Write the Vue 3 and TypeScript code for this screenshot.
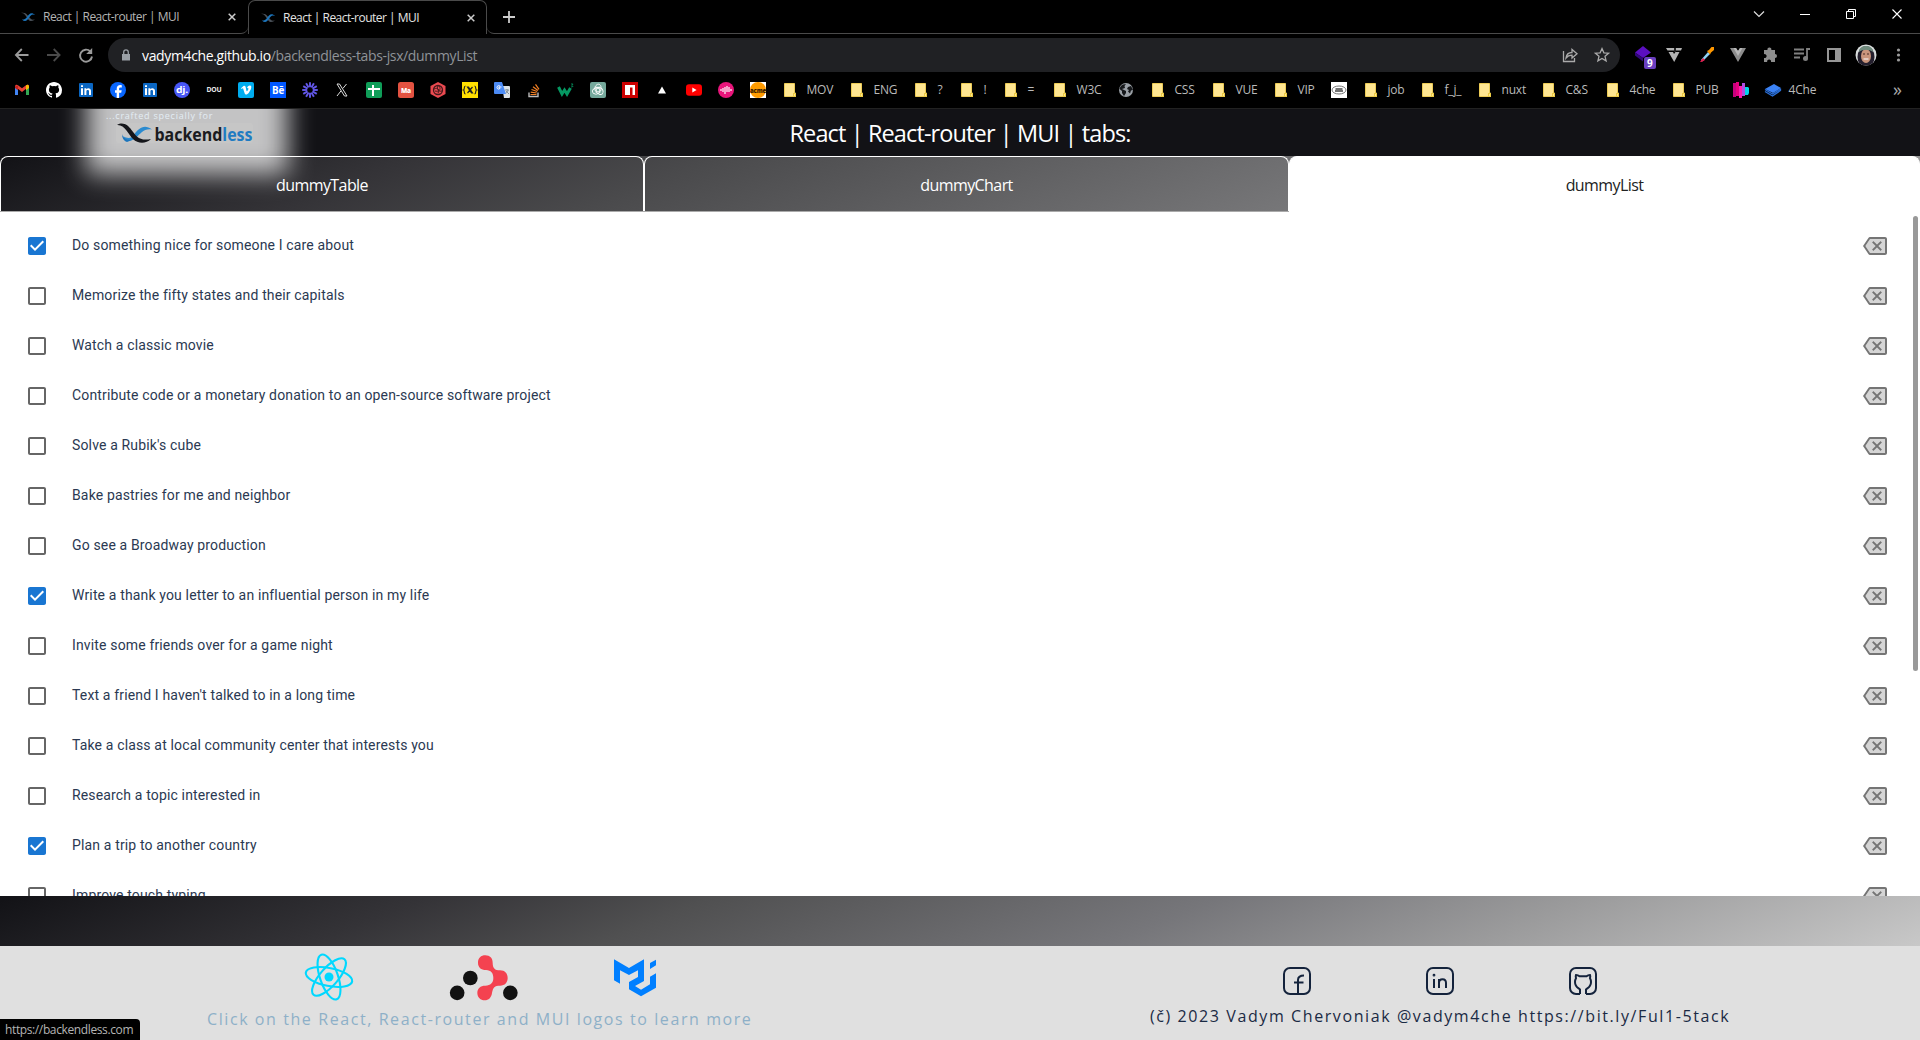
<script setup lang="ts">
interface Bookmark { icon: string; label?: string; width: number }
interface Task { text: string; done: boolean }

const folder = '<path d="M1.5 1.5h10v9h1v4h-11z" fill="#ffe692"/><path d="M1.5 1.5h10v9.5M1.5 1.5v13h9" stroke="#eccb55" fill="none"/><path d="M10 11h3v4h-3z" fill="#eccb45"/><path d="M11 12h1v2h-1z" fill="#ffe692"/>'
const linkedin = '<rect x="1" y="1" width="14" height="14" rx="1" fill="#0a66c2"/><path d="M3 6.3h2V13H3zM3 3.2h2V5H3zM6.400 6.300h1.900v.9c1.200-1.700 4.700-1.400 4.700 1.600V13h-2V9.300c0-1.900-2.600-1.800-2.600 0V13h-2z" fill="#fff"/>'
const tabIcon = '<path d="M1 4c5-1 6 8 10 8 2 0 3-1 4-2-1 1-3 1-4 0C8 7 6 2.500 1 4z" fill="#4b525a"/><path d="M15 6c-5-3-6 6-10 6-1 0-2-.5-3-1.500 4 .5 5-3 7-5s4-1.500 6 .5z" fill="#1c75bc"/>'
const githubPath = 'M8 0C3.580 0 0 3.580 0 8c0 3.540 2.290 6.530 5.470 7.590.4.070.55-.17.55-.38v-1.340c-2.230.48-2.700-1.070-2.700-1.070-.36-.92-.89-1.170-.89-1.170-.73-.5.050-.49.050-.49.81.060 1.230.83 1.230.83.72 1.230 1.870.87 2.330.67.070-.52.280-.87.510-1.070-1.780-.2-3.640-.89-3.640-3.950 0-.87.310-1.590.82-2.150-.08-.2-.36-1.020.08-2.120 0 0 .67-.21 2.200.82a7.600 7.600 0 0 1 4 0c1.530-1.030 2.200-.82 2.200-.82.44 1.100.16 1.920.08 2.120.51.56.82 1.280.82 2.150 0 3.070-1.870 3.750-3.650 3.950.29.25.54.73.54 1.480v2.200c0 .21.15.46.55.38A8 8 0 0 0 16 8c0-4.420-3.580-8-8-8z'
const rays = Array.from({ length: 12 }, (_, i) => `<path d="M8 .2v5" transform="rotate(${i * 30} 8 8)"/>`).join('')
const iconText = (t: string, size: number, y: number, fill = '#fff', len = 12, weight = 700) =>
  `<text x="8" y="${y}" text-anchor="middle" textLength="${len}" lengthAdjust="spacingAndGlyphs" font-family="Open Sans, sans-serif" font-weight="${weight}" font-size="${size}" fill="${fill}">${t}</text>`

const art: Record<string, string> = {
  folder, linkedin,
  gmail: '<path d="M1 4v9h3V6.500z" fill="#4285f4"/><path d="M12 6.500V13h3V4z" fill="#34a853"/><path d="M1 4.500C1 2.500 3 2.500 4 3.300l4 3 4-3c1-.8 3-.8 3 1.200L8 10z" fill="#ea4335"/><path d="M1 4.500V6l3 2.300V3.500z" fill="#c5221f"/><path d="M12 3.400v4.900L15 6V4.500c0-2-2-2-3-1.100z" fill="#fbbc04"/>',
  github: `<path d="${githubPath}" fill="#fff"/>`,
  facebook: '<circle cx="8" cy="8" r="8" fill="#0866ff"/><path d="M6.700 16v-5.300H5V8.300h1.700V7c0-2.800 1.300-4 3.800-4l1.300.2v2.200h-1.200c-1.200 0-1.500.5-1.500 1.500v1.400h2.600l-.5 2.400H9.100V16z" fill="#fff"/>',
  dj: '<circle cx="8" cy="8" r="8" fill="#4756f5"/>' + iconText('dj.', 9.500, 10.500, '#fff', 12),
  dou: iconText('DOU', 7, 10.400, '#e8e8e8', 15),
  vimeo: '<rect width="16" height="16" rx="2" fill="#00adef"/><path d="M3 6.200 5.500 4c1.300-.9 2 .1 2.300 1.700.3 1.800.7 3.500 1.100 3.500S11 6.700 10.200 6.200c-.3-.3-.8 0-1.200.2.400-2 1.600-2.900 3-2.800 2.500.3 1 4.300-1 6.800-2.200 2.700-3.900 2.700-4.600 0L5.200 6.700c-.3-.8-.8-.3-1.500.3z" fill="#fff"/>',
  behance: '<rect width="16" height="16" fill="#0057ff"/>' + iconText('Bē', 10, 11.500),
  rays: `<g stroke="#6257e8" stroke-width="1.900">${rays}</g>`,
  x: '<path d="M3 2h2.500L13 14h-2.500z" fill="none" stroke="#ddd"/><path d="M12.500 2 9 6.300M6.900 9 3 14" stroke="#ddd"/>',
  sheets: '<rect width="16" height="16" rx="2" fill="#0f9d58"/><path d="M6 3h2v3h6v2H8v6H6V8H2V6h4z" fill="#fff"/>',
  ma: '<rect width="16" height="16" rx="2.500" fill="#e25241"/>' + iconText('Ma', 7.500, 10.700, '#fff', 10, 800),
  hex: '<path d="m8 0 7.500 4v8L8 16 .5 12V4z" fill="#ea4a50"/><circle cx="8" cy="8" r="4.500" fill="none" stroke="#43191c" stroke-width="1.300"/><path d="M4 7c4-2 6 1 4 4m1-7c3 4-1 6-4 5m7 0C9 10 6 7 8 4" fill="none" stroke="#43191c"/>',
  code: '<rect width="16" height="16" fill="#ffdf00"/><path d="M5.500 5h1l4 6h-1zM10.500 5l-5 6M3.500 4C1.500 4 3 7.500 1.500 8 3 8.500 1.500 12 3.500 12M12.500 4c2 0 .5 3.500 2 4-1.500.5 0 4-2 4" fill="none" stroke="#222" stroke-width="1.200"/>',
  translate: '<path d="M8 4h7a1 1 0 0 1 1 1v10a1 1 0 0 1-1 1H10z" fill="#dce1e5"/><path d="M1 0h7l4 12H1a1 1 0 0 1-1-1V1a1 1 0 0 1 1-1z" fill="#4c8bf5"/><path d="M7.500 5H5v1.300h1C5.600 7.700 3 7.400 3 5.500S5.200 3.200 6 4.300" fill="none" stroke="#fff"/><path d="M11 8h4m-2-1v1m1 0c0 2-2 3-2 3m0-2 3 3" fill="none" stroke="#6b7c88" stroke-width=".8"/>',
  stack: '<path d="M3 10.500v4h9v-4" fill="none" stroke="#bcbbbb" stroke-width="1.400"/><path d="M4.500 12.500h6M4.700 10.200l6 .8M5.500 7.500l5.700 2M7 4.700l5 3.700M9.500 2.300l3.500 5" fill="none" stroke="#f48024" stroke-width="1.200"/>',
  w3: '<path d="M.5 5 4 12l2.500-4L9 12l3.500-6" fill="none" stroke="#059862" stroke-width="3"/><path d="M13 2h2l-1 1.500 1 1-2 .5" fill="none" stroke="#059862" stroke-width=".8"/>',
  gpt: '<rect width="16" height="16" rx="2" fill="#75a99c"/><g fill="none" stroke="#fff" stroke-width=".9"><path d="M6 3.500c2-2.500 5-1 5 1.500v3.500L8 10 5 8.500V5z"/><path d="M6 3.500c2-2.500 5-1 5 1.500v3.500L8 10 5 8.500V5z" transform="rotate(120 8 8)"/><path d="M6 3.500c2-2.500 5-1 5 1.500v3.500L8 10 5 8.500V5z" transform="rotate(240 8 8)"/></g>',
  npm: '<rect width="16" height="16" fill="#cb0000"/><path d="M3 3h10v10h-2.500V5.500H8V13H3z" fill="#fff"/>',
  vercel: '<path d="m8 4.500 4 7H4z" fill="#fff"/>',
  youtube: '<rect y="2.300" width="16" height="11.500" rx="3" fill="#f00"/><path d="m6.300 5.600 4.300 2.400-4.300 2.400z" fill="#fff"/>',
  wave: '<circle cx="8" cy="8" r="8" fill="#e9157b"/><path d="M3 7v2M5 6v4M7 5v7M9 4v6M11 5v5M13 7v2" stroke="#fff" stroke-width="1.200"/>',
  acme: '<rect width="16" height="16" fill="#fff"/><circle cx="8" cy="8" r="8" fill="#ff9b00"/>' + iconText('acme', 7, 10.500, '#3a1a00', 16, 800),
  globe: '<circle cx="8" cy="8" r="7" fill="#9aa0a6"/><path d="M5 2.500 8 2 6.500 4 7 6 4 7l4 2v2l-2 3-2-3V9L1.500 7C2 5 3 3.500 5 2.500zM10 5l3-1 2 4-2 .5-1 3-2-2 1-1.500-2-1z" fill="#15171a"/>',
  stamp: '<rect width="16" height="16" fill="#fff"/><ellipse cx="8" cy="8" rx="7" ry="4" fill="none" stroke="#777"/><path d="M4.500 7h7M4 9h8" stroke="#444" stroke-width="1.400"/>',
  pink: '<path d="M0 1h3v14H0z" fill="#c6007e"/><path d="M3 0h3v14H3z" fill="#e6007e"/><path d="M6 4h3v12H6z" fill="#ff1cb0"/><path d="M9 1h3v13H9z" fill="#b04ce0"/><path d="M12 5h3l1 1v5l-1 2h-3z" fill="#00d4e8"/>',
  layers: '<path d="m0 7 9-5 7 4-8 5z" fill="#3b82f6"/><path d="m0 7.500 7.500 4.500L15.500 7M0 9.500l7.500 4.500 8-5.500V6.500" fill="none" stroke="#2a6fd8" stroke-width="1.300"/>',
}

const bookmarks: Bookmark[] = [
  ...['gmail', 'github', 'linkedin', 'facebook', 'linkedin', 'dj', 'dou', 'vimeo', 'behance', 'rays', 'x', 'sheets', 'ma', 'hex', 'code', 'translate', 'stack', 'w3', 'gpt', 'npm', 'vercel', 'youtube', 'wave'].map(icon => ({ icon, width: 32 })),
  { icon: 'acme', width: 33 },
  { icon: 'folder', label: 'MOV', width: 67 },
  { icon: 'folder', label: 'ENG', width: 64 },
  { icon: 'folder', label: '?', width: 46 },
  { icon: 'folder', label: '!', width: 44 },
  { icon: 'folder', label: '=', width: 49 },
  { icon: 'folder', label: 'W3C', width: 65 },
  { icon: 'globe', width: 33 },
  { icon: 'folder', label: 'CSS', width: 61 },
  { icon: 'folder', label: 'VUE', width: 62 },
  { icon: 'folder', label: 'VIP', width: 57 },
  { icon: 'stamp', width: 33 },
  { icon: 'folder', label: 'job', width: 57 },
  { icon: 'folder', label: 'f_j_', width: 57 },
  { icon: 'folder', label: 'nuxt', width: 64 },
  { icon: 'folder', label: 'C&S', width: 64 },
  { icon: 'folder', label: '4che', width: 66 },
  { icon: 'folder', label: 'PUB', width: 61 },
  { icon: 'pink', width: 32 },
  { icon: 'layers', label: '4Che', width: 70 },
]

const tasks: Task[] = [
  { text: 'Do something nice for someone I care about', done: true },
  { text: 'Memorize the fifty states and their capitals', done: false },
  { text: 'Watch a classic movie', done: false },
  { text: 'Contribute code or a monetary donation to an open-source software project', done: false },
  { text: "Solve a Rubik's cube", done: false },
  { text: 'Bake pastries for me and neighbor', done: false },
  { text: 'Go see a Broadway production', done: false },
  { text: 'Write a thank you letter to an influential person in my life', done: true },
  { text: 'Invite some friends over for a game night', done: false },
  { text: "Text a friend I haven't talked to in a long time", done: false },
  { text: 'Take a class at local community center that interests you', done: false },
  { text: 'Research a topic interested in', done: false },
  { text: 'Plan a trip to another country', done: true },
  { text: 'Improve touch typing', done: false },
]
</script>

<template>
  <div class="screen">
    <div class="tabstrip">
      <div class="btab first">
        <svg class="fav" viewBox="0 0 16 16" v-html="tabIcon" />
        <span class="btitle">React | React-router | MUI</span>
        <svg class="bclose" viewBox="0 0 8 8"><path d="m.7.7 6.600 6.600m0-6.600L.7 7.300" /></svg>
      </div>
      <div class="btab active">
        <svg class="fav" viewBox="0 0 16 16" v-html="tabIcon" />
        <span class="btitle">React | React-router | MUI</span>
        <svg class="bclose" viewBox="0 0 8 8"><path d="m.7.7 6.600 6.600m0-6.600L.7 7.300" /></svg>
      </div>
      <div class="rest">
        <svg class="plus" viewBox="0 0 12 12"><path d="M6 0v12M0 6h12" stroke="#ccc" stroke-width="1.800" /></svg>
        <svg class="win" viewBox="0 0 150 16" fill="none" stroke="#fff">
          <path d="m4 5.500 5 5 5-5" stroke="#ddd" stroke-width="1.200" />
          <path d="M50 8.500h10" />
          <path d="M96.500 5.500h7v7h-7zM98.500 5V3.500h7v7H104" />
          <path d="m142.500 3.500 9 9m0-9-9 9" stroke-width="1.100" />
        </svg>
      </div>
    </div>

    <div class="toolbar">
      <svg class="nav" viewBox="0 0 90 16" fill="none">
        <path d="M14.500 8H2m5.800-6L1.900 8l5.900 6" stroke="#9b9b9b" stroke-width="1.800" />
        <path d="M33 8h12.500m-5.800-6 5.900 6-5.900 6" stroke="#4b4b4b" stroke-width="1.800" />
        <path d="M76.300 4.400A6 6 0 1 0 78 9.500" stroke="#9b9b9b" stroke-width="1.900" />
        <path d="M78.200 1v6h-6z" fill="#9b9b9b" />
      </svg>
      <div class="url">
        <svg class="lock" viewBox="0 0 10 12"><path d="M1 5h8v6.500H1z" fill="#9aa0a6" /><path d="M2.700 5V3.200a2.300 2.300 0 0 1 4.600 0V5" fill="none" stroke="#9aa0a6" stroke-width="1.300" /></svg>
        <span class="addr"><b>vadym4che.github.io</b>/backendless-tabs-jsx/dummyList</span>
        <svg class="urlicons" viewBox="0 0 48 16" fill="none" stroke="#aaa" stroke-width="1.300">
          <path d="M1.500 4v10.500h11V11" /><path d="M4 11c.5-4 3-5.500 6-5.500V2.500l5 4.300-5 4.200V8.200C7 8.200 5.500 9 4 11z" />
          <path d="m40 1.500 1.900 4.300 4.700.4-3.600 3.100 1.100 4.600-4.100-2.500-4.100 2.500L37 9.300l-3.600-3.100 4.700-.4z" />
        </svg>
      </div>
      <svg class="ext" viewBox="0 0 280 34">
        <path d="m11 8 8 6.500-8 5.500-8-5.500z" fill="#5b0fc0" /><path d="m3 14.500 8 5.500v3.500l-8-6z" fill="#32087a" />
        <rect x="12" y="19" width="12" height="12" rx="2" fill="#6a3fc0" /><text x="15" y="28.700" class="badge">9</text>
        <path d="M34 10h16l-1 2.500H35.500zM36.500 14H41l1 2 1.500-2h4l-5.300 10z" fill="#b3b3b3" /><path d="M42 10h2v4h-2z" fill="#222" />
        <path d="m69 22 7-8 2 2-7.500 7.500z" fill="#8fd3f5" /><path d="m68 24 3-4 2 2-3.500 2z" fill="#e6194b" /><path d="m75 13 2-1 2.500-3 2.500 0v3l-3 2.500-1 2z" fill="#ff9800" />
        <path d="M98 10h6l2 3 2-3h6l-8 14z" fill="#8d8d8d" /><path d="m101.500 10 4.500 8 4.500-8H108l-2 3-2-3z" fill="#b8b8b8" />
        <path d="M132 12h3.500a2 2 0 1 1 3.800 0H143v4a2 2 0 1 1 0 4v4h-4a2 2 0 1 0-3.800 0H132v-4a2 2 0 1 0 0-3.800z" fill="#8e8e8e" />
        <path d="M162 11.500h10M162 15.500h10M162 19.500h6M178 11h-3v9" fill="none" stroke="#808080" stroke-width="1.800" /><circle cx="173.500" cy="20.500" r="2.500" fill="#808080" />
        <rect x="196" y="11" width="12" height="12" fill="none" stroke="#969696" stroke-width="2" /><rect x="203" y="11" width="5" height="12" fill="#969696" />
        <clipPath id="face"><circle cx="234" cy="17" r="10.500" /></clipPath>
        <g clip-path="url(#face)"><path d="M223 6h22v22h-22z" fill="#d8dcdc" /><ellipse cx="234" cy="19" rx="8.500" ry="11" fill="#241f2d" /><ellipse cx="234" cy="18" rx="5" ry="7" fill="#c9957c" /><path d="M227 14c0-8 14-8 14 0-4-3-10-3-14 0z" fill="#6f8b7d" /><path d="M231 16h2m2 0h2" stroke="#4a2a24" /><path d="M231.500 21h5" stroke="#fff" stroke-width="1.200" /></g>
        <circle cx="266.500" cy="12" r="1.600" fill="#9b9b9b" /><circle cx="266.500" cy="17" r="1.600" fill="#9b9b9b" /><circle cx="266.500" cy="22" r="1.600" fill="#9b9b9b" />
      </svg>
    </div>

    <div class="bookmarks">
      <div v-for="(b, i) in bookmarks" :key="i" class="bm" :style="{ width: b.width + 'px' }">
        <svg viewBox="0 0 16 16" v-html="art[b.icon]" /><span v-if="b.label">{{ b.label }}</span>
      </div>
      <span class="more">»</span>
    </div>

    <div class="page">
      <header class="head">
        <h1>React | React-router | MUI | tabs:</h1>
      </header>
      <nav class="tabs">
        <a class="tab">dummyTable</a>
        <a class="tab second">dummyChart</a>
        <a class="tab current">dummyList</a>
      </nav>
      <div class="glow">
        <span class="crafted">...crafted specially for</span>
        <svg class="brand" viewBox="0 0 137 20">
          <path d="M3 0h131a3 3 0 0 1 3 3v14a3 3 0 0 1-3 3H3a3 3 0 0 1-3-3V3a3 3 0 0 1 3-3z" fill="#c6c6c6" />
          <path d="M36 6.500C28 0 22 6 18.500 11c-2.500 4-6 5.500-11.500 2 2 4 8 6.500 13 2 4-4 8-10 16-8.500z" fill="#2b8bd0" />
          <path d="M6 11c1 5 7 6 10 6l-5 2c-3-1-5-4-5-8z" fill="#1c75bc" />
          <path d="M1 2c6-3.500 11 0 14.500 5 4.500 6 8 11.500 19.500 9-5 5-13 5-18 0C12 11 9 1.500 1 2z" fill="#15161b" />
          <text x="38.500" y="17.500" textLength="98" lengthAdjust="spacingAndGlyphs" fill="#1a1b20">backend<tspan fill="#1f7cc2">less</tspan></text>
        </svg>
      </div>

      <main class="list">
        <div v-for="t in tasks" :key="t.text" class="row">
          <svg class="check" viewBox="0 0 24 24">
            <path v-if="t.done" fill="#1976d2" d="M19 3H5c-1.110 0-2 .9-2 2v14c0 1.100.89 2 2 2h14c1.110 0 2-.9 2-2V5c0-1.100-.89-2-2-2zm-9 14l-5-5 1.410-1.410L10 14.170l7.590-7.590L19 8l-9 9z" />
            <path v-else fill="#666" d="M19 5v14H5V5h14m0-2H5c-1.100 0-2 .9-2 2v14c0 1.100.9 2 2 2h14c1.100 0 2-.9 2-2V5c0-1.100-.9-2-2-2z" />
          </svg>
          <span class="task">{{ t.text }}</span>
          <svg class="del" viewBox="0 0 24 24" fill="#757575">
            <path opacity=".3" d="M7.060 5L2.400 12l4.670 7H22V5H7.060zM9 8.410L10.410 7 14 10.590 17.590 7 19 8.410 15.410 12 19 15.590 17.590 17 14 13.410 10.410 17 9 15.590 12.590 12 9 8.410z" />
            <path d="M22 3H7c-.69 0-1.230.35-1.590.88L0 12l5.410 8.110c.36.53.9.89 1.590.89h15c1.100 0 2-.9 2-2V5c0-1.100-.9-2-2-2zm0 16H7.070L2.400 12l4.660-7H22v14zm-11.590-2L14 13.410 17.590 17 19 15.590 15.410 12 19 8.410 17.590 7 14 10.590 10.410 7 9 8.410 12.590 12 9 15.590z" />
          </svg>
        </div>
        <div class="thumb" />
      </main>
      <div class="strip" />

      <footer class="foot">
        <div class="left">
          <div class="logos">
            <svg width="50" height="50" viewBox="-25 -25 50 50" fill="none" stroke="#00d8ff" stroke-width="2.100">
              <circle r="4.500" fill="#00d8ff" stroke="none" />
              <ellipse rx="23.600" ry="9" transform="rotate(11)" /><ellipse rx="23.600" ry="9" transform="rotate(71)" /><ellipse rx="23.600" ry="9" transform="rotate(131)" />
            </svg>
            <svg width="68" height="46" viewBox="150 287 204 138">
              <g fill="#121212"><circle cx="171.500" cy="400.500" r="22" /><circle cx="211" cy="356" r="22" /><circle cx="331" cy="400.500" r="22" /></g>
              <path fill="#f44250" d="M256 288c14 0 22 9 22 22 0 16 6 23 22 23 15 0 23 10 23 23s-8 23-23 23c-16 0-21 5-24 22-2 14-10 22-22 22s-22-9-22-22c0-14 9-22 24-22 16-1 24-8 24-23s-7-23-22-24c-15 0-24-8-24-22s9-22 22-22z" />
            </svg>
            <svg width="42" height="38" viewBox="642 299 126 114" fill="#007fff">
              <path d="m642 300 45 26 45-26v65l-27 15 18 11 27-16v-23l18-10v43l-45 26-36-21v-22l27-15v-20l-27 14-27-14v40l-18-10zM750 311l18-10v17l-18 11z" />
            </svg>
          </div>
          <p class="hint">Click on the React, React-router and MUI logos to learn more</p>
        </div>
        <div class="right">
          <div class="social">
            <svg viewBox="0 0 28 28"><rect x="1" y="1" width="26" height="26" rx="6" /><path d="M15 27V13q0-4.500 6-4.500M11 15.500h9.500" /></svg>
            <svg viewBox="0 0 28 28"><rect x="1" y="1" width="26" height="26" rx="6" /><path d="M8 12v9M13 21v-9m0 4c0-5 7-5 7 0v5" /><circle cx="8" cy="8.200" r=".8" stroke-width="1.200" /></svg>
            <svg viewBox="0 0 28 28"><path d="M11 27H7a6 6 0 0 1-6-6V7a6 6 0 0 1 6-6h14a6 6 0 0 1 6 6v14a6 6 0 0 1-6 6h-4" /><path d="M11 27v-4.500c-1-1.500-5-2-5-7.500 0-2 .5-3 1-3.800-.4-1.500-.3-2.600 0-3.200 1.500 0 2.700.6 3.500 1.300h7c.8-.7 2-1.300 3.500-1.300.3.600.4 1.700 0 3.200.5.800 1 1.800 1 3.800 0 5.500-4 6-5 7.500V27" /></svg>
          </div>
          <p class="copy">(č) 2023 Vadym Chervoniak @vadym4che https://bit.ly/Ful1-5tack</p>
        </div>
      </footer>
      <div class="status"><span>https://backendless.com</span></div>
    </div>
  </div>
</template>

<style>
body { margin: 0; background: #000; overflow: hidden; }
</style>

<style scoped>
* { box-sizing: border-box; }
svg { display: block; flex: none; overflow: visible; }
.screen { width: 1920px; height: 1040px; display: flex; flex-direction: column; overflow: hidden; background: #000; font-family: "Open Sans", "Noto Sans", sans-serif; }
.tabstrip { height: 34px; flex: none; display: flex; }
.btab { height: 34px; display: flex; align-items: center; border-bottom: 1px solid #4a4a4a; color: #b4b4b4; font-size: 12px; }
.btab.first { width: 248px; padding-left: 20px; border-bottom-right-radius: 7px; }
.btab.active { width: 239px; padding-left: 11px; border: 1px solid #4a4a4a; border-bottom: 0; border-radius: 7px 7px 0 0; color: #e4e4e4; }
.fav { width: 16px; height: 16px; }
.btitle { width: 185px; margin-left: 7px; letter-spacing: -0.52px; white-space: nowrap; }
.active .btitle { width: 184px; }
.bclose { width: 8px; height: 8px; stroke: #ccc; stroke-width: 1.5; }
.rest { flex: 1; display: flex; justify-content: space-between; border-bottom: 1px solid #4a4a4a; border-bottom-left-radius: 7px; }
.plus { width: 12px; height: 12px; margin: 11px 0 0 16px; }
.win { width: 150px; height: 16px; margin: 6px 20px 0 0; }
.toolbar { height: 42px; flex: none; display: flex; align-items: center; }
.nav { width: 90px; height: 16px; margin-left: 14px; }
.url { width: 1512px; height: 34px; flex: none; margin-left: 4px; border-radius: 17px; background: #202124; display: flex; align-items: center; }
.lock { width: 10px; height: 12px; margin: 0 11px 0 13px; }
.addr { flex: 1; font-size: 14px; letter-spacing: -0.36px; color: #8f9398; }
.addr b { font-weight: 400; color: #fff; }
.urlicons { width: 48px; height: 16px; margin-right: 10px; }
.ext { width: 280px; height: 34px; margin-left: 12px; }
.badge { font: 700 10px "Open Sans", sans-serif; fill: #fff; }
.bookmarks { height: 33px; flex: none; display: flex; align-items: center; padding-left: 14px; padding-bottom: 5px; border-bottom: 1px solid #222; color: #bababa; font-size: 12px; }
.bm { display: flex; align-items: center; flex: none; white-space: nowrap; letter-spacing: -0.2px; }
.bm svg { width: 16px; height: 16px; }
.bm span { margin-left: 7.5px; line-height: 20px; }
.more { margin-left: 58px; font-size: 18px; color: #aaa; line-height: 22px; margin-top: -2px; }

.page { height: 931px; display: flex; flex-direction: column; position: relative; overflow: hidden; }
.head { height: 47px; flex: none; background: #121216; display: flex; align-items: center; justify-content: center; }
h1 { margin: 2px 0 0; font-size: 23.5px; font-weight: 400; letter-spacing: -0.88px; line-height: 45px; color: #fff; white-space: nowrap; }
.tabs { height: 56px; flex: none; display: flex; background: linear-gradient(158deg, #121216 0%, #343337 20%, #4a4a4c 35%, #78787a 70%, #9f9f9f 100%); border-bottom: 1px solid #aaa; }
.tab { width: 644px; height: 55px; flex: none; border: 1px solid #fff; border-bottom: 0; border-radius: 8px 8px 0 0; display: flex; align-items: center; justify-content: center; padding-top: 2px; color: #fff; font-size: 16px; letter-spacing: -0.58px; }
.tab.second { width: 645px; }
.tab.current { width: 631px; height: 56px; padding-top: 1px; background: #fff; color: #222; }
.glow { position: absolute; z-index: 1; left: 106px; top: 0; width: 165px; height: 45px; }
.glow::before { content: ""; position: absolute; z-index: -1; left: -20px; right: -17px; top: -50px; bottom: -20px; background: rgba(255, 255, 255, .75); filter: blur(13px); }
.crafted { display: block; padding-top: 1px; font-size: 9px; line-height: 12px; letter-spacing: .75px; color: #e4edf4; white-space: nowrap; }
.brand { width: 137px; height: 20px; margin: 1px 0 0 10px; }
.brand text { font: 700 18px "Open Sans", sans-serif; }
.list { height: 684px; flex: none; background: #fff; position: relative; overflow: hidden; padding: 9px 29px 0 25px; }
.row { height: 50px; display: flex; align-items: center; }
.check { width: 24px; height: 24px; }
.task { flex: 1; margin-left: 23px; font: 400 14px/20px Roboto, sans-serif; letter-spacing: .15px; color: #2b3952; margin-top: -2px; }
.del { width: 24px; height: 24px; margin-right: 4px; }
.thumb { position: absolute; right: 2px; top: 4px; width: 5px; height: 455px; border-radius: 3px; background: #999; }
.strip { height: 50px; flex: none; background: linear-gradient(158deg, #121216 0%, #343337 21%, #505051 35%, #76767a 60%, #9b9b9c 78%, #c8c8c8 100%); }
.foot { flex: 1; background: #e0e0e0; display: flex; }
.left { width: 960px; }
.logos { height: 62px; padding: 0 0 0 304px; display: flex; align-items: center; }
.logos svg:nth-child(2) { margin-left: 96px; margin-top: 2px; }
.logos svg:nth-child(3) { margin-left: 96px; margin-top: 2px; }
.hint { margin: 0 0 0 207px; font-size: 16px; line-height: 22px; letter-spacing: 1.58px; color: #8eb0c8; white-space: nowrap; }
.social { display: flex; gap: 115px; padding: 21px 0 0 323px; }
.social svg { width: 28px; height: 28px; fill: none; stroke: #14233c; stroke-width: 2; }
.copy { margin: 10px 0 0 190px; font-size: 16px; line-height: 22px; letter-spacing: 1.59px; color: #1a2a44; white-space: nowrap; }
.status { position: absolute; left: 0; bottom: 0; width: 140px; height: 21px; background: #000; border-radius: 0 4px 0 0; padding-left: 5px; font-size: 12px; line-height: 21px; letter-spacing: -0.38px; color: #b4b4b4; white-space: nowrap; }
</style>
